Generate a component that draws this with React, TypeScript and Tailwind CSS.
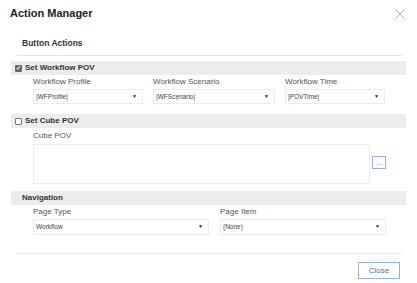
import { X } from 'lucide-react';

function Select({ value, className }: { value: string; className: string }) {
  return (
    <div
      className={`flex items-center justify-between border border-[#ececec] bg-white pl-[2px] pr-[5px] text-[6.5px] text-[#444] ${className}`}
    >
      <span>{value}</span>
      <span className="text-[5px] text-[#222]">▼</span>
    </div>
  );
}

function Field({ label, value, width, h = 'h-[15px]' }: { label: string; value: string; width: string; h?: string }) {
  return (
    <div className={`flex flex-col ${width}`}>
      <div className="h-[11px] text-[8px] leading-[11px] text-[#555]">{label}</div>
      <Select value={value} className={`mt-[2px] ${h}`} />
    </div>
  );
}

function Band({ label, check }: { label: string; check?: 'on' | 'off' }) {
  return (
    <div className="flex h-[14px] items-center gap-[3px] bg-[#ececec] pl-[4px] text-[8px] font-bold text-[#333]">
      {check === 'on' && (
        <span className="flex h-[7px] w-[7px] items-center justify-center rounded-[1px] bg-[#666] text-[6px] leading-none text-white">
          ✓
        </span>
      )}
      {check === 'off' && <span className="h-[7px] w-[7px] rounded-[1px] border border-[#777] bg-white" />}
      <span className={check ? '' : 'pl-[7px]'}>{label}</span>
    </div>
  );
}

export default function App() {
  return (
    <div className="h-[283px] w-[417px] overflow-hidden bg-white font-['Liberation_Sans',Arial,sans-serif] text-[#333]">
      <div className="flex h-[27px] items-center justify-between pl-[10px] pr-[8px]">
        <span className="text-[11px] font-bold text-[#222]">Action Manager</span>
        <X size={18} strokeWidth={1.2} className="text-[#b0b0b0]" />
      </div>

      <div className="px-[11px]">
        <div className="ml-[6px] mr-[4px] border-b border-[#e5e5e5] pb-[6px] pl-[5px] pt-[10px] text-[8.5px] font-bold leading-[12px] text-[#333]">
          Button Actions
        </div>

        <div className="mt-[5px]">
          <Band label="Set Workflow POV" check="on" />
          <div className="flex gap-[10px] pl-[22px] pt-[1px]">
            <Field label="Workflow Profile" value="|WFProfile|" width="w-[110px]" />
            <Field label="Workflow Scenario" value="|WFScenario|" width="w-[122px]" />
            <Field label="Workflow Time" value="|POVTime|" width="w-[100px]" />
          </div>
        </div>

        <div className="mt-[10px]">
          <Band label="Set Cube POV" check="off" />
          <div className="pl-[22px] pt-[2px]">
            <div className="h-[12px] text-[8px] leading-[12px] text-[#555]">Cube POV</div>
            <div className="mt-[2px] flex items-start gap-[2px]">
              <div className="h-[40px] w-[337px] border border-[#ececec] bg-white" />
              <div className="mt-[12px] flex h-[13px] w-[14px] items-center justify-center border border-[#8fb0ee] text-[7px] leading-none text-[#4a76c9]">
                ...
              </div>
            </div>
          </div>
        </div>

        <div className="mt-[7px]">
          <Band label="Navigation" />
          <div className="flex gap-[11px] pl-[22px] pt-[1px]">
            <Field label="Page Type" value="Workflow" width="w-[176px]" h="h-[16px]" />
            <Field label="Page Item" value="(None)" width="w-[166px]" h="h-[16px]" />
          </div>
        </div>

        <div className="ml-[6px] mr-[4px] mt-[18px] border-t border-[#e5e5e5]" />
        <div className="flex justify-end pr-[6px] pt-[8px]">
          <button className="h-[17px] w-[42px] border border-[#8fb0ee] bg-white text-[8px] text-[#3f6fc4]">
            Close
          </button>
        </div>
      </div>
    </div>
  );
}
